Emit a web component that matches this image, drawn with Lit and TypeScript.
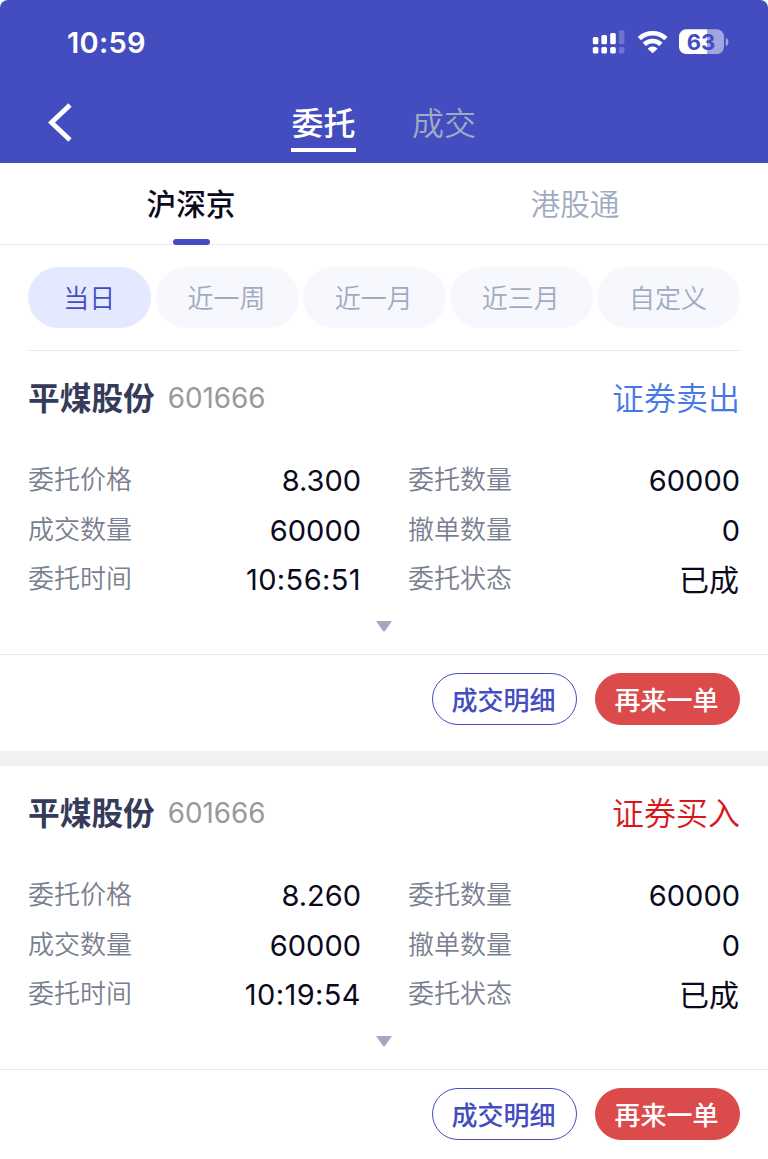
import { LitElement, html, css } from "lit";
import { customElement, property } from "lit/decorators.js";
import { classMap } from "lit/directives/class-map.js";

interface Order {
  name: string;
  code: string;
  side: "sell" | "buy";
  fields: [string, string][];
}

const ORDERS: Order[] = [
  {
    name: "平煤股份",
    code: "601666",
    side: "sell",
    fields: [
      ["委托价格", "8.300"],
      ["委托数量", "60000"],
      ["成交数量", "60000"],
      ["撤单数量", "0"],
      ["委托时间", "10:56:51"],
      ["委托状态", "已成"],
    ],
  },
  {
    name: "平煤股份",
    code: "601666",
    side: "buy",
    fields: [
      ["委托价格", "8.260"],
      ["委托数量", "60000"],
      ["成交数量", "60000"],
      ["撤单数量", "0"],
      ["委托时间", "10:19:54"],
      ["委托状态", "已成"],
    ],
  },
];

@customElement("status-bar")
class StatusBar extends LitElement {
  static styles = css`
    :host {
      display: flex;
      justify-content: space-between;
      height: 84px;
      padding: 0 39px 0 67px;
      color: #fff;
    }
    .time {
      font: 560 29px/86px Inter, sans-serif;
      letter-spacing: 0.3px;
    }
    svg {
      display: block;
      margin-top: 28px;
    }
    .level {
      font: 650 22px Inter, sans-serif;
      fill: #444dbf;
    }
  `;
  render() {
    return html`
      <div class="time">10:59</div>
      <svg width="137" height="28" viewBox="592 28 137 28" fill="#fff">
        <rect x="592.8" y="37" width="5.6" height="7.2" rx="1.5" />
        <rect x="601.4" y="35" width="5.6" height="9.2" rx="1.5" />
        <rect x="610.2" y="33" width="5.6" height="11.2" rx="1.5" />
        <rect x="618.8" y="30.2" width="5.6" height="14" rx="1.5" opacity=".22" />
        <rect x="592.8" y="47" width="5.6" height="6.5" rx="1.5" />
        <rect x="601.4" y="47" width="5.6" height="6.5" rx="1.5" />
        <rect x="610.2" y="47" width="5.6" height="6.5" rx="1.5" />
        <rect x="618.8" y="47" width="5.6" height="6.5" rx="1.5" opacity=".22" />
        <g fill="none" stroke="#fff" stroke-width="4.6">
          <path d="M639.3 38.6A19.2 19.2 0 0 1 665.9 38.6" />
          <path d="M644.3 44.3A12 12 0 0 1 660.9 44.3" />
        </g>
        <path d="M652.6 53.2L647.6 48.7A6.8 6.8 0 0 1 657.6 48.7Z" />
        <path d="M686.2 29.3H707V54H686.2A7.2 7.2 0 0 1 679 46.8V36.5A7.2 7.2 0 0 1 686.2 29.3Z" />
        <path d="M707 29.3H716.8A7.2 7.2 0 0 1 724 36.5V46.8A7.2 7.2 0 0 1 716.8 54H707Z" opacity=".5" />
        <path d="M725.8 37.8A4.6 4.6 0 0 1 725.8 46.2Z" opacity=".5" />
        <text class="level" x="701" y="49.8" text-anchor="middle">63</text>
      </svg>
    `;
  }
}

@customElement("order-card")
class OrderCard extends LitElement {
  @property({ attribute: false }) order!: Order;

  static styles = css`
    :host {
      display: block;
      height: 400px;
      background: #fff;
      font-family: "Noto Sans CJK SC", sans-serif;
      font-weight: 350;
    }
    .head {
      display: flex;
      height: 94px;
      padding: 0 28px;
    }
    .name {
      font-size: 31.7px;
      line-height: 91px;
      font-weight: 700;
      color: #353b58;
    }
    .code {
      flex: 1;
      margin-left: 13px;
      font: 400 27.8px/94px Inter, sans-serif;
      color: #999;
    }
    .side {
      font-size: 32px;
      line-height: 91px;
    }
    .sell {
      color: #4878e6;
    }
    .buy {
      color: #d9161b;
    }
    .fields {
      display: grid;
      grid-template-columns: 333px 332px;
      column-gap: 47px;
      grid-auto-rows: 49.6px;
      padding: 8px 28px 0;
    }
    .field {
      display: flex;
      justify-content: space-between;
    }
    .label {
      font-size: 26px;
      line-height: 50px;
      color: #7a7f8f;
    }
    .value {
      padding-top: 3px;
      font-family: Inter, sans-serif;
      font-size: 29px;
      font-weight: 400;
      line-height: 49px;
      color: #0a0a1c;
    }
    .time {
      letter-spacing: 0.4px;
    }
    .status {
      padding: 2px 1px 0 0;
      font-family: "Noto Sans CJK SC", sans-serif;
      font-size: 30px;
    }
    .expand {
      display: flex;
      justify-content: center;
      height: 53.2px;
      box-sizing: border-box;
      padding-top: 19px;
      border-bottom: 1px solid #e6e6e8;
    }
    .actions {
      display: flex;
      justify-content: flex-end;
      gap: 18px;
      padding: 18px 28px 0;
    }
    .button {
      box-sizing: border-box;
      width: 145px;
      height: 52.5px;
      padding-right: 2px;
      border: 1px solid #444dbf;
      border-radius: 27px;
      text-align: center;
      font-size: 26px;
      line-height: 49px;
      font-weight: 500;
      color: #444dbf;
    }
    .again {
      border-color: #db4b4b;
      background: #db4b4b;
      color: #fff;
    }
  `;
  render() {
    const { name, code, side, fields } = this.order;
    return html`
      <div class="head">
        <span class="name">${name}</span>
        <span class="code">${code}</span>
        <span class="side ${side}">${side === "sell" ? "证券卖出" : "证券买入"}</span>
      </div>
      <div class="fields">
        ${fields.map(
          ([label, value]) => html`<div class="field">
            <span class="label">${label}</span
            ><span
              class=${classMap({ value: true, time: label === "委托时间", status: label === "委托状态" })}
              >${value}</span
            >
          </div>`
        )}
      </div>
      <div class="expand">
        <svg width="16" height="11" viewBox="0 0 16 11"><path d="M0 0H16L9.2 9.8Q8 11.2 6.8 9.8Z" fill="#a1abbf" /></svg>
      </div>
      <div class="actions">
        <div class="button">成交明细</div>
        <div class="button again">再来一单</div>
      </div>
    `;
  }
}

@customElement("app-root")
class AppRoot extends LitElement {
  static styles = css`
    :host {
      display: block;
      height: 1159px;
      overflow: hidden;
      background: #fff;
      font-family: "Noto Sans CJK SC", sans-serif;
      font-weight: 350;
    }
    .header {
      height: 163px;
      border-radius: 8px 8px 0 0;
      background: #444dbf;
    }
    .nav {
      display: grid;
      grid-template-columns: 291px 65px 56px 64px;
      height: 79px;
    }
    .back {
      display: block;
      margin: 18px 0 0 46px;
    }
    .tab {
      box-sizing: border-box;
      height: 68px;
      text-align: center;
      font-size: 32px;
      line-height: 75px;
      color: #a0abc3;
    }
    .tab.current {
      border-bottom: 4px solid #fff;
      font-weight: 500;
      color: #fff;
    }
    .tab.other {
      grid-column: 4;
    }
    .markets {
      display: grid;
      grid-template-columns: 1fr 1fr;
      box-sizing: border-box;
      height: 82px;
      border-bottom: 1px solid #e3e8f2;
    }
    .market {
      display: flex;
      flex-direction: column;
      align-items: center;
      height: 82px;
      padding-right: 2px;
      font-size: 29.7px;
      line-height: 80px;
      color: #a0abc0;
    }
    .market.current {
      font-weight: 500;
      color: #0a0a1c;
    }
    .market.current::after {
      content: "";
      flex: none;
      width: 37px;
      height: 6px;
      margin-top: -4px;
      border-radius: 3px;
      background: #444dbf;
    }
    .ranges {
      display: flex;
      justify-content: space-between;
      box-sizing: border-box;
      height: 106px;
      margin: 0 28px;
      padding-top: 22px;
      border-bottom: 1px solid #e9e9eb;
    }
    .range {
      box-sizing: border-box;
      width: 143px;
      height: 61.3px;
      padding-right: 1px;
      border-radius: 31px;
      background: #f6f8fd;
      text-align: center;
      font-size: 26px;
      line-height: 60px;
      color: #a0abc0;
    }
    .range.current {
      width: 123.4px;
      background: #e5e9ff;
      color: #444dbf;
    }
    .gap {
      height: 15px;
      background: #f1f1f1;
    }
  `;
  render() {
    return html`
      <div class="header">
        <status-bar></status-bar>
        <div class="nav">
          <svg class="back" width="28" height="42" viewBox="46 102 28 42">
            <path d="M70 105L51.5 122.5L70 140" fill="none" stroke="#fff" stroke-width="4.8" />
          </svg>
          <div class="tab current">委托</div>
          <div class="tab other">成交</div>
        </div>
      </div>
      <div class="markets">
        <div class="market current">沪深京</div>
        <div class="market">港股通</div>
      </div>
      <div class="ranges">
        ${["当日", "近一周", "近一月", "近三月", "自定义"].map(
          (label, i) => html`<div class=${classMap({ range: true, current: i === 0 })}>${label}</div>`
        )}
      </div>
      ${ORDERS.map(
        (order, i) => html`${i ? html`<div class="gap"></div>` : ""}<order-card .order=${order}></order-card>`
      )}
    `;
  }
}
